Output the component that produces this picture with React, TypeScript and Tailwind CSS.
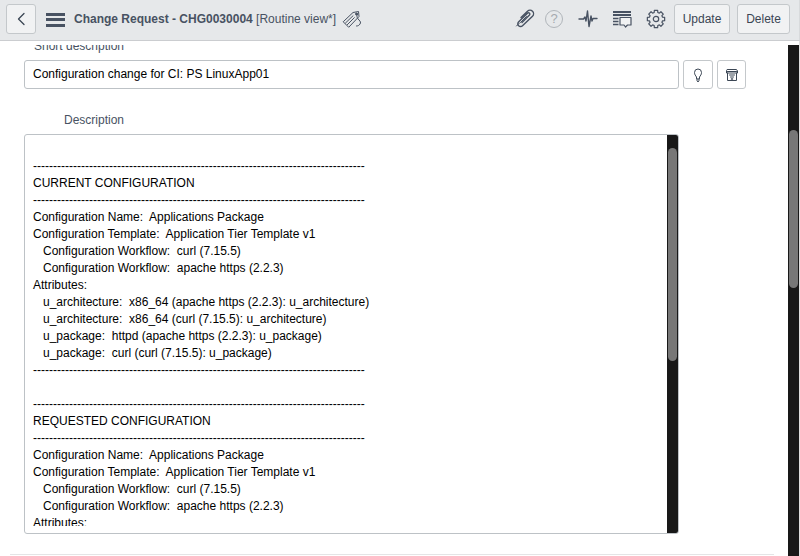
import React from "react";

const rule = "-".repeat(83);

const description = [
  "",
  rule,
  "CURRENT CONFIGURATION",
  rule,
  "Configuration Name:  Applications Package",
  "Configuration Template:  Application Tier Template v1",
  "   Configuration Workflow:  curl (7.15.5)",
  "   Configuration Workflow:  apache https (2.2.3)",
  "Attributes:",
  "   u_architecture:  x86_64 (apache https (2.2.3): u_architecture)",
  "   u_architecture:  x86_64 (curl (7.15.5): u_architecture)",
  "   u_package:  httpd (apache https (2.2.3): u_package)",
  "   u_package:  curl (curl (7.15.5): u_package)",
  rule,
  "",
  rule,
  "REQUESTED CONFIGURATION",
  rule,
  "Configuration Name:  Applications Package",
  "Configuration Template:  Application Tier Template v1",
  "   Configuration Workflow:  curl (7.15.5)",
  "   Configuration Workflow:  apache https (2.2.3)",
  "Attributes:",
].join("\n");

function Icon({ size = 20, width = 1.2, children }: { size?: number; width?: number; children: React.ReactNode }) {
  return (
    <svg
      width={size}
      height={size}
      viewBox={`0 0 ${size} ${size}`}
      fill="none"
      stroke="currentColor"
      strokeWidth={width}
      strokeLinecap="round"
      strokeLinejoin="round"
      aria-hidden="true"
      className="block shrink-0"
    >
      {children}
    </svg>
  );
}

function gearPath() {
  const points: string[] = [];
  const teeth = 8;
  for (let i = 0; i < teeth; i++) {
    const base = (i / teeth) * Math.PI * 2 - Math.PI / 2;
    [
      [-0.27, 6.8],
      [-0.19, 8.8],
      [0.19, 8.8],
      [0.27, 6.8],
    ].forEach(([offset, radius]) => {
      const a = base + offset;
      points.push(`${(10 + radius * Math.cos(a)).toFixed(2)} ${(10 + radius * Math.sin(a)).toFixed(2)}`);
    });
  }
  return `M${points.join("L")}Z`;
}

const boxButton = "flex items-center justify-center rounded-[3px] border border-[#c4c8cb] text-[#3b4654]";

function Header() {
  return (
    <header className="flex h-[41px] shrink-0 items-start border-r border-b border-r-[#d8dadc] border-b-[#cbcdd0] bg-[#e6e8ea] pr-[9px] pl-[6px] pt-1 text-[#485262]">
      <button type="button" aria-label="Back" className={`${boxButton} size-[30px] bg-[#f1f2f3]`}>
        <Icon width={1.3}>
          <path d="M13 4.500 7.500 10l5.500 5.500" />
        </Icon>
      </button>
      <div className="flex h-[30px] min-w-0 flex-1 items-center">
        <button type="button" aria-label="Menu" className="ml-[9px]">
          <Icon>
            <path d="M1 4h19v3H1zM1 9h19v3H1zM1 15h19v3H1z" fill="currentColor" stroke="none" />
          </Icon>
        </button>
        <h1 className="ml-[9px] truncate text-[12px]">
          <b>Change Request - CHG0030004</b> [Routine view*]
        </h1>
        <button type="button" aria-label="Tags" className="ml-[6px]">
          <Icon width={1}>
            <path d="M1.500 12.500 11 3.500l5.500-1 .5 5-10 10.500z" />
            <path d="M3.500 14 11 6.800M5.300 15.700l7-7" />
            <circle cx="14.500" cy="5" r="1" fill="currentColor" />
            <path d="M15 5.500c-.5 2.500.5 4 2 5.500s2 2.500 1 4-2 2-3.500 2" />
          </Icon>
        </button>
      </div>
      <div className="flex h-[30px] shrink-0 items-center">
        <button type="button" aria-label="Attachments">
          <Icon width={1.4}>
            <path d="m7 13.500 7.500-7.500a1.300 1.300 0 0 0-2-1.800L3.500 13a2.700 2.700 0 0 0 4 3.700l10-9.500a3.500 3.500 0 0 0-5-5L6 8.500" />
            <path d="m5.500 13.500 6-6M1.500 17l3-3" strokeWidth="1" />
          </Icon>
        </button>
        <button type="button" aria-label="Help" className="ml-[10px] flex size-[18px] items-center justify-center rounded-full border border-[#b0b5ba] text-[13px] text-[#a5aaaf]">
          ?
        </button>
        <button type="button" aria-label="Activity" className="ml-[15px]">
          <Icon width={1.4}>
            <path d="M1 10h4.500l1.500-2 1 4L9.500 2l1.500 15.500L13 7l1 5 1-2.500h4" />
          </Icon>
        </button>
        <button type="button" aria-label="Templates" className="ml-[14px]">
          <Icon>
            <path d="M1 3h18M1 6h18" strokeWidth="2" strokeLinecap="butt" />
            <path d="M1 9.500h5.500M1 12.500h5.500M1 15.500h5.500" strokeWidth="1.500" strokeLinecap="butt" />
            <path d="M8 8.500h11v7.500h-3.500L13.500 18 12 16H8z" fill="#f1f2f3" />
          </Icon>
        </button>
        <button type="button" aria-label="Settings" className="ml-[14px]">
          <Icon width={1.2}>
            <path d={gearPath()} />
            <circle cx="10" cy="10" r="2.700" />
          </Icon>
        </button>
        <button type="button" className={`${boxButton} ml-2 h-[30px] w-[56px] bg-[#f1f2f3] text-[12px]`}>
          Update
        </button>
        <button type="button" className={`${boxButton} ml-[7px] h-[30px] w-[53px] bg-[#f1f2f3] text-[12px]`}>
          Delete
        </button>
      </div>
    </header>
  );
}

export default function App() {
  return (
    <div className="flex h-screen flex-col overflow-hidden bg-white font-['Liberation_Sans',Arial,sans-serif] text-black">
      <Header />
      <div className="flex min-h-0 flex-1 border-r border-[#dedede] pt-1">
        <main className="min-w-0 flex-1 overflow-hidden">
          <div className="-mt-2 px-6">
            <label htmlFor="short" className="ml-[10px] block h-[23px] text-[12px] leading-[18px] text-[#485262]">
              Short description
            </label>
            <div className="flex">
              <input
                id="short"
                type="text"
                defaultValue="Configuration change for CI: PS LinuxApp01"
                className="h-[29px] min-w-0 flex-1 rounded-[3px] border border-[#bdc2c6] bg-white px-2 pb-0.5 text-[12px] outline-none"
              />
              <button type="button" aria-label="Suggestion" className={`${boxButton} ml-1 h-[29px] w-[30px]`}>
                <Icon size={16} width={1}>
                  <path d="M6.500 11.500V10C5.500 8.500 4.500 7.500 4.500 5.500a3.500 3.500 0 0 1 7 0c0 2-1 3-2 4.500v1.500zM6.500 13h3M7.500 14.500h1" />
                </Icon>
              </button>
              <button type="button" aria-label="Knowledge" className={`${boxButton} mr-[18px] ml-1 h-[29px] w-[29px]`}>
                <Icon size={16} width={1}>
                  <path d="M3.500 2.500h9l1 1.500v2h-11V4zM3.500 6v7.500h9V6M5.500 8h5M6.500 10h3M3.500 4.500h9" />
                  <path d="M7.500 12h1" strokeWidth="1.500" />
                </Icon>
              </button>
            </div>
            <label htmlFor="description" className="mt-[22px] ml-10 block text-[12px] leading-[18px] text-[#485262]">
              Description
            </label>
            <div className="mt-[5px] mr-[85px] flex h-[400px] overflow-hidden rounded-[3px] border border-[#bdc2c6]">
              <textarea
                id="description"
                defaultValue={description}
                className="mt-[6px] mb-[7px] min-w-0 flex-1 resize-none overflow-hidden bg-white px-2 text-[12px] leading-[17px] whitespace-pre outline-none"
              />
              <div className="w-[11px] bg-[#181818] px-px pt-[13px]">
                <div className="h-[213px] rounded-full bg-[#777777]" />
              </div>
            </div>
          </div>
          <hr className="mt-5 mr-[14px] ml-[10px] border-[#e4e5e6]" />
        </main>
        <div className="w-[11px] shrink-0 bg-[#181818] px-px pt-[85px]">
          <div className="h-[158px] rounded-full bg-[#777777]" />
        </div>
      </div>
    </div>
  );
}
